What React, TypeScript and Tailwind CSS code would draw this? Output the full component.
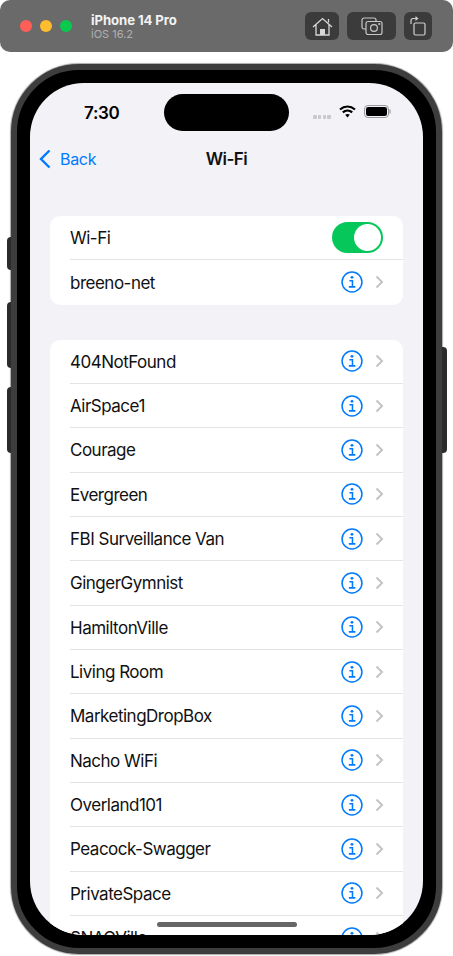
import React from 'react';

const networks = [
  '404NotFound',
  'AirSpace1',
  'Courage',
  'Evergreen',
  'FBI Surveillance Van',
  'GingerGymnist',
  'HamiltonVille',
  'Living Room',
  'MarketingDropBox',
  'Nacho WiFi',
  'Overland101',
  'Peacock-Swagger',
  'PrivateSpace',
  'SNAGVille',
];

function InfoIcon() {
  return (
    <svg width="22" height="22" viewBox="0 0 23 23" fill="none" stroke="#007aff">
      <circle cx="11.5" cy="11.5" r="10.4" strokeWidth="1.6" />
      <circle cx="11.5" cy="6.6" r="1.5" fill="#007aff" stroke="none" />
      <path d="M8.8 10.2H12V16.4M8.2 16.6H15" strokeWidth="1.6" />
    </svg>
  );
}

function Chevron() {
  return (
    <svg width="9" height="14" viewBox="0 0 9 14" fill="none" stroke="#c4c4c7" strokeWidth="2">
      <path d="M1.5 1.5L7 7L1.5 12.5" />
    </svg>
  );
}

function NetworkRow({ name, last }: { name: string; last?: boolean }) {
  return (
    <div className="flex h-[44.33px] items-center pl-5">
      <div className={`flex h-full flex-1 items-center border-[#e3e3e6] pr-[19px] ${last ? '' : 'border-b'}`}>
        <span className="flex-1 pt-[2px] text-[17px] tracking-[-0.5px] text-[#111]">{name}</span>
        <InfoIcon />
        <span className="ml-[12px] flex"><Chevron /></span>
      </div>
    </div>
  );
}

export default function App() {
  return (
    <div className="h-[956px] w-[453px] overflow-hidden bg-white font-['Inter',sans-serif]">
      {/* Simulator title bar */}
      <div className="flex h-[52px] items-center rounded-[10px] bg-[#6a6a6a] pl-5 pr-[21px]">
        <div className="flex gap-2">
          <span className="h-3 w-3 rounded-full bg-[#ff5f57]" />
          <span className="h-3 w-3 rounded-full bg-[#febc2e]" />
          <span className="h-3 w-3 rounded-full bg-[#0ac94f]" />
        </div>
        <div className="ml-[19px] flex-1 pt-[2px] leading-none">
          <p className="text-[13.2px] font-bold tracking-[-0.1px] text-[#f2f2f2]">iPhone 14 Pro</p>
          <p className="mt-[2px] text-[11px] text-[#b0b0b0]">iOS 16.2</p>
        </div>
        <div className="flex gap-2">
          <button className="flex h-7 w-[34px] items-center justify-center rounded-md bg-[#3b3b3b]">
            <svg width="21" height="19" viewBox="0 0 21 19" fill="none" stroke="#d8d8d8" strokeWidth="1.3">
              <path d="M1 10L10.5 1.5L20 10M4 7.5V18H17V7.5M16.5 2V5.5" />
              <rect x="8" y="12" width="5" height="6" fill="#d8d8d8" stroke="none" />
            </svg>
          </button>
          <button className="flex h-7 w-[49px] items-center justify-center rounded-md bg-[#3b3b3b]">
            <svg width="22" height="18" viewBox="0 0 22 18" fill="none" stroke="#c8c8c8" strokeWidth="1.2">
              <path d="M5 12H3a2 2 0 0 1-2-2V3a2 2 0 0 1 2-2h10a2 2 0 0 1 2 2v1" />
              <rect x="5" y="4.5" width="16" height="13" rx="2" />
              <circle cx="13" cy="11" r="3.4" />
              <circle cx="18.3" cy="7" r=".5" />
            </svg>
          </button>
          <button className="flex h-7 w-7 items-center justify-center rounded-md bg-[#3b3b3b]">
            <svg width="16" height="20" viewBox="0 0 16 20" fill="none" stroke="#d0d0d0" strokeWidth="1.2">
              <rect x="4" y="7" width="11" height="12" rx="1.5" />
              <path d="M1 8V4.5A2 2 0 0 1 3 2.5H6" />
              <path d="M5.5 0L8.5 2.5L5.5 5Z" fill="#d0d0d0" stroke="none" />
            </svg>
          </button>
        </div>
      </div>

      {/* Device */}
      <div className="relative mx-[11px] mt-[12px] h-[890px] rounded-[68px] border-[6px] border-[#3d3d3d] bg-black p-[13px] shadow-[0_0_1px_1px_#aaa]">
        <span className="absolute -left-[10px] top-[167px] h-[33px] w-[4px] rounded-l-sm bg-[#2b2b2b]" />
        <span className="absolute -left-[10px] top-[232px] h-[66px] w-[4px] rounded-l-sm bg-[#2b2b2b]" />
        <span className="absolute -left-[10px] top-[317px] h-[66px] w-[4px] rounded-l-sm bg-[#2b2b2b]" />
        <span className="absolute -right-[11px] top-[277px] h-[106px] w-[5px] rounded-r-sm bg-[#2b2b2b]" />

        <div className="relative h-full overflow-hidden rounded-[54px] bg-[#f2f2f7]">
          {/* Status bar */}
          <div className="flex h-[54px] items-center justify-between pl-[54px] pr-[32px] pt-[3px]">
            <span className="pt-[4px] text-[17px] font-semibold tracking-[-0.3px] text-black">7:30</span>
            <div className="flex items-center gap-[8px]">
              <div className="mt-[10px] flex gap-[1.2px]">
                <span className="h-1 w-[3.6px] rounded-[1px] bg-[#c9c9cc]" />
                <span className="h-1 w-[3.6px] rounded-[1px] bg-[#c9c9cc]" />
                <span className="h-1 w-[3.6px] rounded-[1px] bg-[#c9c9cc]" />
                <span className="h-1 w-[3.6px] rounded-[1px] bg-[#c9c9cc]" />
              </div>
              <svg width="17" height="13" viewBox="0 0 17 13" fill="none" stroke="#000" strokeWidth="2.2">
                <path d="M1 4.5C5.5 .5 11.5 .5 16 4.5M3.8 7.4C6.5 5 10.5 5 13.2 7.4" />
                <path d="M6.2 9.8L8.5 12.6L10.8 9.8C9.4 8.6 7.6 8.6 6.2 9.8Z" fill="#000" stroke="none" />
              </svg>
              <svg width="27" height="13" viewBox="0 0 27 13" fill="none">
                <rect x=".5" y=".5" width="24" height="12" rx="3.5" stroke="#999" />
                <rect x="2" y="2" width="21" height="9" rx="2.2" fill="#000" />
                <path d="M26 4.5V8.5" stroke="#999" strokeWidth="1.2" />
              </svg>
            </div>
          </div>
          <div className="absolute left-[134px] top-[11px] h-[37px] w-[125px] rounded-full bg-black" />

          {/* Nav bar */}
          <div className="relative flex h-11 items-center justify-center">
            <div className="absolute left-[9px] flex items-center gap-[9px] text-[#007aff]">
              <svg width="12" height="20" viewBox="0 0 12 20" fill="none" stroke="#007aff" strokeWidth="2.4">
                <path d="M10.5 1.5L2 10L10.5 18.5" />
              </svg>
              <span className="text-[16px] tracking-[-0.3px]">Back</span>
            </div>
            <span className="pt-[2px] text-[17px] font-semibold tracking-[-0.5px] text-[#111]">Wi-Fi</span>
          </div>

          {/* Lists */}
          <div className="mx-5 mt-[35px] overflow-hidden rounded-[10px] bg-white">
            <div className="flex h-[44.33px] items-center pl-5">
              <div className="flex h-full flex-1 items-center border-b border-[#e3e3e6] pr-5">
                <span className="flex-1 pt-[2px] text-[17px] tracking-[-0.5px] text-[#111]">Wi-Fi</span>
                <div className="flex h-[31px] w-[51px] items-center justify-end rounded-full bg-[#06c75a] p-[2px]">
                  <span className="h-[27px] w-[27px] rounded-full bg-white" />
                </div>
              </div>
            </div>
            <NetworkRow name="breeno-net" last />
          </div>

          <div className="mx-5 mt-[35px] overflow-hidden rounded-t-[10px] bg-white">
            {networks.map((name) => (
              <NetworkRow key={name} name={name} />
            ))}
          </div>

          <div className="absolute bottom-[8px] left-[127px] h-[5px] w-[140px] rounded-full bg-[#666]" />
        </div>
      </div>
    </div>
  );
}
